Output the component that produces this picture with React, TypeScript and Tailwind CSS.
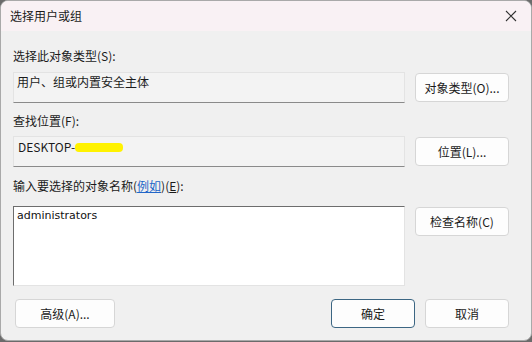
import type { ReactNode } from "react";

const font = { fontFamily: '"Noto Sans CJK SC", "Noto Sans", sans-serif' };

function Button({ children, primary }: { children: ReactNode; primary?: boolean }) {
  return (
    <button
      type="button"
      className={
        primary
          ? "flex h-[29px] w-full items-center justify-center rounded-[4px] border border-[#3c6683] bg-[#fdfdfd] text-[12px] text-[#1b1b1b]"
          : "flex h-[29px] w-full items-center justify-center rounded-[4px] border border-[#d6d6d6] bg-[#fdfdfd] text-[12px] text-[#1b1b1b]"
      }
    >
      {children}
    </button>
  );
}

function ReadField({ children }: { children: ReactNode }) {
  return (
    <div className="flex h-[31px] w-[392px] items-start border border-[#e3e3e3] border-b-[#8a8a8a] bg-[#f3f3f3] px-[3px] pt-0 text-[12px] text-[#1b1b1b]">
      {children}
    </div>
  );
}

export default function App() {
  return (
    <div className="h-[342px] w-[532px] bg-[#6b6b6b]" style={font}>
      <div className="flex h-[341px] w-[532px] flex-col overflow-hidden rounded-t-[8px] rounded-b-[8px] border border-[#a9a9a9] bg-[#f0f0f0]">
        <div className="flex h-[30px] shrink-0 items-center justify-between bg-[#f9f1f4] pl-[9px] pr-[14px]">
          <span className="text-[12px] text-[#1b1b1b]">选择用户或组</span>
          <svg width="12" height="12" viewBox="0 0 12 12" className="text-[#333]">
            <path d="M1 1 L11 11 M11 1 L1 11" stroke="currentColor" strokeWidth="1.1" fill="none" />
          </svg>
        </div>

        <div className="flex flex-col pl-[12px] pr-[22px]">
          <div className="mt-[17px] text-[12px] leading-[16px] text-[#1b1b1b]">选择此对象类型(S):</div>
          <div className="mt-[8px] flex items-start justify-between">
            <ReadField>用户、组或内置安全主体</ReadField>
            <div className="mt-[1px] w-[94px]">
              <Button>对象类型(O)...</Button>
            </div>
          </div>

          <div className="mt-[10px] text-[12px] leading-[16px] text-[#1b1b1b]">查找位置(F):</div>
          <div className="mt-[7px] flex items-start justify-between">
            <ReadField>
              <span className="pt-[1px] pl-[1px]">DESKTOP-</span>
              <span className="mt-[6px] inline-block h-[9px] w-[48px] rounded-[4px] bg-[#fff200]" />
            </ReadField>
            <div className="mt-[1px] w-[94px]">
              <Button>位置(L)...</Button>
            </div>
          </div>

          <div className="mt-[11px] text-[12px] leading-[16px] text-[#1b1b1b]">
            输入要选择的对象名称(<span className="text-[#2266c8] underline">例如</span>)(<span className="underline">E</span>):
          </div>
          <div className="mt-[12px] flex items-start justify-between">
            <div className="h-[80px] w-[392px] border border-[#e3e3e3] border-l-[#6d6d6d] border-t-[#6d6d6d] bg-white px-[3px] pt-[1px] leading-[16px] text-[#111]" style={{ fontFamily: '"DejaVu Sans", sans-serif', fontSize: "11px" }}>
              administrators
            </div>
            <div className="mt-[1px] w-[94px]">
              <Button>检查名称(C)</Button>
            </div>
          </div>

          <div className="mt-[13px] flex items-center justify-between">
            <div className="ml-[2px] w-[100px]">
              <Button>高级(A)...</Button>
            </div>
            <div className="flex gap-[10px]">
              <div className="w-[84px]">
                <Button primary>确定</Button>
              </div>
              <div className="w-[84px]">
                <Button>取消</Button>
              </div>
            </div>
          </div>
        </div>
      </div>
    </div>
  );
}
